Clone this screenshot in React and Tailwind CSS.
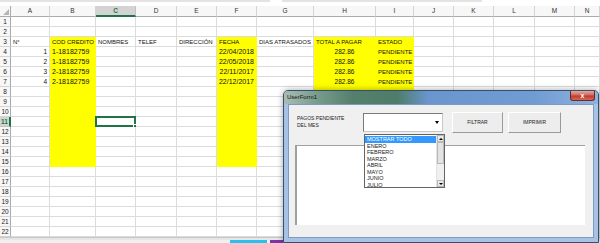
import React from "react";

const COLS = ["A", "B", "C", "D", "E", "F", "G", "H", "I", "J", "K", "L", "M", "N"];
const YELLOW = ["B", "F", "H", "I"];

const data = {
    3: { A: "N°", B: "COD CREDITO", C: "NOMBRES", D: "TELEF", E: "DIRECCIÓN", F: "FECHA", G: "DIAS ATRASADOS", H: "TOTAL A PAGAR", I: "ESTADO" },
    4: { A: "1", B: "1-18182759", F: "22/04/2018", H: "282.86", I: "PENDIENTE" },
    5: { A: "2", B: "1-18182759", F: "22/05/2018", H: "282.86", I: "PENDIENTE" },
    6: { A: "3", B: "2-18182759", F: "22/11/2017", H: "282.86", I: "PENDIENTE" },
    7: { A: "4", B: "2-18182759", F: "22/12/2017", H: "282.86", I: "PENDIENTE" },
};

const meses = ["MOSTRAR TODO", "ENERO", "FEBRERO", "MARZO", "ABRIL", "MAYO", "JUNIO", "JULIO"];

const Cell = ({ col, row }) => {
    const text = data[row]?.[col] || "";
    const yellow = YELLOW.includes(col) && row >= 3 && row <= 15;
    const isData = row >= 4 && row <= 7;
    const align =
        isData && (col === "A" || col === "F") ? "text-right pr-[2px]" :
        isData && col === "H" ? "text-center" :
        "text-left pl-[2px]";
    const size =
        isData && (col === "B" || col === "F") ? "text-[7px]" :
        isData && (col === "A" || col === "H") ? "text-[6.5px]" :
        "text-[6px]";
    const selected = col === "C" && row === 11;

    return (
        <div
            className={`relative h-[10px] border-b border-r leading-[10px] whitespace-nowrap text-[#111] ${size} ${align} ${
                yellow ? "bg-[#ffff00] border-[#ffff00]" : "bg-white border-[#dcdcdc]"
            }`}
        >
            {text}
            {selected && (
                <div className="absolute -left-[1px] -top-[1px] w-[41px] h-[11px] border-2 border-[#217346]">
                    <div className="absolute -right-[3px] -bottom-[3px] w-[4px] h-[4px] bg-[#217346] border border-white" />
                </div>
            )}
        </div>
    );
};

const Sheet = () => (
    <div className="flex flex-col">
        <div className="h-[6px] bg-white flex">
            <div className="w-[270px] h-[2px] bg-[#e3e3e3]" />
            <div className="w-[12px]" />
            <div className="w-[200px] h-[2px] bg-[#e3e3e3]" />
        </div>
        <div className="grid grid-cols-[11px_39px_46px_40px_41px_40px_40px_57px_62px_38px_40px_40px_41px_40px_25px]">
            <div className="relative h-[11px] bg-[#f7f7f7] border-r border-b border-[#ababab]">
                <div className="absolute right-[1px] bottom-[1px] w-0 h-0 border-l-[6px] border-l-transparent border-b-[6px] border-b-[#b5b5b5]" />
            </div>
            {COLS.map(c => (
                <div
                    key={c}
                    className={`h-[11px] text-center text-[6.5px] leading-[10px] border-r ${
                        c === "C"
                            ? "bg-[#d3d3d3] text-[#217346] font-bold border-b-2 border-b-[#217346] border-r-[#c2c2c2]"
                            : "bg-[#f7f7f7] text-[#333] border-b border-b-[#ababab] border-r-[#d4d4d4]"
                    }`}
                >
                    {c}
                </div>
            ))}
            {Array.from({ length: 22 }, (_, i) => i + 1).map(r => (
                <React.Fragment key={r}>
                    <div
                        className={`h-[10px] text-center text-[6.5px] leading-[10px] border-b ${
                            r === 11
                                ? "bg-[#d3d3d3] text-[#217346] font-bold border-r-2 border-r-[#217346] border-b-[#c2c2c2]"
                                : "bg-[#f7f7f7] text-[#222] border-r border-r-[#ababab] border-b-[#d4d4d4]"
                        }`}
                    >
                        {r}
                    </div>
                    {COLS.map(c => (
                        <Cell key={c} col={c} row={r} />
                    ))}
                </React.Fragment>
            ))}
        </div>
        <div className="h-[3px] bg-[#e6e6e6] border-t border-[#c6c6c6]" />
        <div className="h-[3px] flex bg-[#f0f0f0]">
            <div className="w-[230px]" />
            <div className="w-[37px] bg-[#27c1ef]" />
            <div className="w-[3px]" />
            <div className="w-[13px] bg-[#7a36a8]" />
        </div>
    </div>
);

const ComboDropdown = () => (
    <div className="absolute left-[75px] top-[29px] w-[81px] h-[54px] bg-white border border-[#646464] flex">
        <div className="flex-1 flex flex-col pt-[1px]">
            {meses.map((m, i) => (
                <div
                    key={m}
                    className={`h-[6.5px] leading-[6.5px] text-[5.5px] pl-[2px] whitespace-nowrap ${
                        i === 0 ? "bg-[#3399ff] text-white" : "text-[#222]"
                    }`}
                >
                    {m}
                </div>
            ))}
        </div>
        <div className="w-[8px] bg-[#f0f0f0] flex flex-col border-l border-[#e2e2e2]">
            <div className="h-[7px] flex items-center justify-center border border-[#b9b9b9] bg-[#e8e8e8]">
                <div className="w-0 h-0 border-l-[2px] border-r-[2px] border-l-transparent border-r-transparent border-b-[2px] border-b-black" />
            </div>
            <div className="h-[22px] bg-[#e3e3e3] border border-[#b9b9b9]" />
            <div className="flex-1" />
            <div className="h-[7px] flex items-center justify-center border border-[#b9b9b9] bg-[#e8e8e8]">
                <div className="w-0 h-0 border-l-[2px] border-r-[2px] border-l-transparent border-r-transparent border-t-[2px] border-t-black" />
            </div>
        </div>
    </div>
);

const UserForm = () => (
    <div className="absolute left-[283px] top-[90px] w-[316px] h-[153px] rounded-t-[5px] border border-[#34506f] bg-[#a8c2e3] flex flex-col shadow-[0_0_6px_rgba(0,0,0,0.35)]">
        <div className="h-[13px] flex items-start justify-between rounded-t-[4px] bg-[linear-gradient(90deg,#aabcb4_0%,#7a9d8d_10%,#557f6c_22%,#4e7d69_36%,#6a95cd_46%,#719cd3_80%,#8fb2df_100%)]">
            <span className="text-[6px] leading-[13px] text-[#111] pl-[3px]">UserForm1</span>
            <div className="mr-[3px] w-[25px] h-[10px] rounded-b-[3px] border border-t-0 border-[#6d2a24] bg-[linear-gradient(180deg,#e5a89c_0%,#d0685c_45%,#c2392f_55%,#d46a55_100%)] flex items-center justify-center">
                <span className="text-[7px] leading-[8px] font-bold text-white">x</span>
            </div>
        </div>
        <div className="flex-1 px-[4px] pb-[4px] pt-0">
            <div className="relative h-full bg-[#f0f0f0] border border-[#7d9bc2] text-[#222]">
                <div className="flex items-start pl-[8px] pt-[7px]">
                    <div className="w-[66px] mt-[3px] text-[5px] leading-[7px]">
                        PAGOS PENDIENTE
                        <br />
                        DEL MES
                    </div>
                    <div className="mt-[1px] w-[80px] h-[19px] bg-white border border-[#7a7a7a] border-r-[#c8c8c8] border-b-[#c8c8c8] flex items-center justify-end pr-[3px]">
                        <div className="w-0 h-0 border-l-[2px] border-r-[2px] border-l-transparent border-r-transparent border-t-[3px] border-t-black" />
                    </div>
                    <button className="ml-[9px] w-[51px] h-[21px] bg-[#ededed] border border-white border-r-[#9a9a9a] border-b-[#9a9a9a] text-[5px] text-[#222]">
                        FILTRAR
                    </button>
                    <button className="ml-[5px] w-[53px] h-[21px] bg-[#ededed] border border-white border-r-[#9a9a9a] border-b-[#9a9a9a] text-[5px] text-[#222]">
                        IMPRIMIR
                    </button>
                </div>
                <div className="ml-[6px] mt-[12px] w-[290px] h-[80px] bg-white border-t border-l-2 border-[#a0a0a0]" />
                <ComboDropdown />
            </div>
        </div>
    </div>
);

const App = () => {
    return (
        <div className="relative w-[600px] h-[243px] overflow-hidden bg-white font-['Liberation_Sans',Arial,sans-serif]">
            <Sheet />
            <UserForm />
        </div>
    );
};

export default App;
